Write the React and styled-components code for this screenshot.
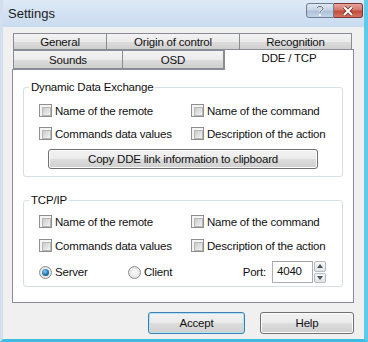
import React from 'react';
import styled, { createGlobalStyle } from 'styled-components';

const GlobalStyle = createGlobalStyle`
  html, body {
    margin: 0;
    padding: 0;
    background: #ffffff;
  }
  * {
    box-sizing: border-box;
  }
`;

const Window = styled.div`
  width: 368px;
  height: 342px;
  display: flex;
  flex-direction: column;
  border-left: 3px solid #d3dfee;
  border-right: 4px solid #5fcaea;
  border-bottom: 3px solid #3fbde0;
  font-family: "Liberation Sans", Arial, sans-serif;
  font-size: 11px;
  letter-spacing: -0.2px;
  color: #000;
  overflow: hidden;
`;

const TitleBar = styled.div`
  height: 27px;
  flex: none;
  display: flex;
  align-items: flex-start;
  justify-content: space-between;
  padding: 0 0 0 5px;
  background: linear-gradient(#dde9f6, #c9dbef);
`;

const Title = styled.span`
  font-size: 13px;
  letter-spacing: 0;
  line-height: 27px;
  color: #1b1b1b;
`;

const Controls = styled.div`
  display: flex;
  margin-top: 3px;
  margin-right: 1px;
`;

const CaptionButton = styled.div`
  width: ${p => p.w}px;
  height: 15px;
  display: flex;
  align-items: center;
  justify-content: center;
  border: 1px solid ${p => (p.close ? '#7a3a33' : '#6d7e95')};
  border-radius: ${p => (p.close ? '0 3px 3px 0' : '3px 0 0 3px')};
  border-left-width: ${p => (p.close ? 0 : 1)}px;
  background: ${p =>
    p.close
      ? 'linear-gradient(#e8a59c 0%, #d4786c 45%, #c44b3b 55%, #d4735f 100%)'
      : 'linear-gradient(#dfe8f2 0%, #c7d5e6 45%, #aec1d9 55%, #c3d4e8 100%)'};
`;

const Client = styled.div`
  flex: 1;
  display: flex;
  flex-direction: column;
  background: #f0f0f0;
  padding: 6px 10px 0 9px;
`;

const Tabs = styled.div`
  display: flex;
  flex-direction: column;
`;

const TabRow = styled.div`
  display: flex;
  align-items: flex-end;
  height: ${p => p.h}px;
  padding-left: 1px;
`;

const Tab = styled.div`
  width: ${p => p.w}px;
  height: ${p => (p.active ? 21 : p.h)}px;
  margin-bottom: ${p => (p.active ? -1 : 0)}px;
  margin-right: ${p => (p.active ? -2 : 0)}px;
  position: relative;
  z-index: ${p => (p.active ? 2 : 1)};
  display: flex;
  justify-content: center;
  align-items: ${p => (p.active ? 'flex-start' : 'center')};
  padding-top: ${p => (p.active ? 2 : 0)}px;
  border: 1px solid #898c95;
  border-bottom: ${p => (p.active ? 'none' : '1px solid #898c95')};
  border-left-width: ${p => (p.first || p.active ? 1 : 0)}px;
  background: ${p => (p.active ? '#ffffff' : 'linear-gradient(#f3f3f3 0%, #ebebeb 50%, #dddddd 51%, #cfcfcf 100%)')};
  font-size: 11.5px;
  color: #111;
`;

const Panel = styled.div`
  height: 234px;
  border: 1px solid #898c95;
  background: #ffffff;
  padding: 11px 0 0 10px;
  display: flex;
  flex-direction: column;
`;

const Group = styled.fieldset`
  width: 320px;
  margin: ${p => p.mt}px 0 0 0;
  padding: ${p => p.pt}px 8px ${p => p.pb}px 15px;
  border: 1px solid #d5dfe5;
  border-radius: 3px;
  min-width: 0;
`;

const Legend = styled.legend`
  padding: 0 2px;
  margin-left: -10px;
  line-height: 13px;
  font-size: 11.5px;
  color: #111;
`;

const Grid = styled.div`
  display: grid;
  grid-template-columns: 152px 1fr;
  grid-auto-rows: 15px;
  row-gap: ${p => p.gap}px;
`;

const Option = styled.label`
  display: flex;
  align-items: center;
  gap: 3px;
  width: ${p => (p.w ? `${p.w}px` : 'auto')};
  flex: none;
  font-size: 11.5px;
  color: #111;
  white-space: nowrap;
`;

const CheckBox = styled.span`
  width: 13px;
  height: 13px;
  flex: none;
  border: 1px solid #8f8f8f;
  background: #f4f4f4;
  padding: 2px;
  &::after {
    content: '';
    display: block;
    width: 7px;
    height: 7px;
    border: 1px solid #b8b8b8;
    background: linear-gradient(135deg, #cbcbcb, #f3f3f3);
  }
`;

const Radio = styled.span`
  width: 13px;
  height: 13px;
  flex: none;
  border-radius: 50%;
  border: 1px solid #8f8f8f;
  background: radial-gradient(circle at 50% 50%, #f5f5f5 30%, #d3d3d3 100%);
  display: flex;
  align-items: center;
  justify-content: center;
  &::after {
    content: '';
    display: ${p => (p.checked ? 'block' : 'none')};
    width: 7px;
    height: 7px;
    border-radius: 50%;
    background: radial-gradient(circle at 40% 35%, #7bd0f5 0%, #1d6aa6 60%, #0d3e70 100%);
  }
`;

const PushButton = styled.button`
  width: ${p => p.w}px;
  height: ${p => p.h}px;
  margin: ${p => p.m || 0};
  border: 1px solid ${p => (p.focused ? '#3c7fb1' : '#707070')};
  border-radius: 3px;
  background: linear-gradient(#f2f2f2 0%, #ebebeb 50%, #dddddd 51%, #cfcfcf 100%);
  box-shadow: inset 0 0 0 1px ${p => (p.focused ? '#aee4f5' : '#fcfcfc')};
  font-family: "Liberation Sans", Arial, sans-serif;
  font-size: 11.5px;
  letter-spacing: -0.2px;
  color: #111;
  padding: 0;
`;

const RadioRow = styled.div`
  display: flex;
  align-items: center;
  height: 22px;
  margin-top: 8px;
`;

const PortLabel = styled.span`
  font-size: 11.5px;
  color: #111;
  margin-left: auto;
  margin-right: 6px;
`;

const PortInput = styled.div`
  width: 41px;
  height: 22px;
  border: 1px solid #abadb3;
  border-top-color: #a0a3aa;
  padding: 3px 0 0 4px;
  font-size: 11.5px;
  color: #111;
  background: #fff;
`;

const Spinner = styled.div`
  display: flex;
  flex-direction: column;
  gap: 1px;
  margin-left: 1px;
  margin-right: 8px;
  height: 22px;
`;

const SpinButton = styled.div`
  width: 12px;
  height: 10.5px;
  border: 1px solid #b6bbc3;
  border-radius: 2px;
  background: linear-gradient(#f7f7f7, #e2e4e8);
  display: flex;
  align-items: center;
  justify-content: center;
`;

const Footer = styled.div`
  display: flex;
  justify-content: flex-end;
  gap: 15px;
  margin-top: 9px;
`;

const Arrow = ({ up }) => (
  <svg width="6" height="4" viewBox="0 0 6 4">
    <path d={up ? 'M0 4 L3 0 L6 4 Z' : 'M0 0 L3 4 L6 0 Z'} fill="#4d5563" />
  </svg>
);

const Check = ({ children }) => (
  <Option>
    <CheckBox />
    {children}
  </Option>
);

const CheckGrid = ({ gap }) => (
  <Grid gap={gap}>
    <Check>Name of the remote</Check>
    <Check>Name of the command</Check>
    <Check>Commands data values</Check>
    <Check>Description of the action</Check>
  </Grid>
);

export default function App() {
  return (
    <>
      <GlobalStyle />
      <Window>
        <TitleBar>
          <Title>Settings</Title>
          <Controls>
            <CaptionButton w={28}>
              <svg width="10" height="11" viewBox="0 0 10 11">
                <path d="M2 3.2 C2 1 8 1 8 3.5 C8 5.5 5 5.5 5 7.5" stroke="#fff" strokeWidth="2" fill="none" />
                <rect x="4" y="9" width="2" height="2" fill="#fff" />
                <path d="M2 3.2 C2 1 8 1 8 3.5 C8 5.5 5 5.5 5 7.5" stroke="#38475c" strokeWidth="1" fill="none" />
              </svg>
            </CaptionButton>
            <CaptionButton w={29} close>
              <svg width="12" height="10" viewBox="0 0 12 10">
                <path d="M2 1 L10 9 M10 1 L2 9" stroke="#5b1d17" strokeWidth="3.4" />
                <path d="M2 1 L10 9 M10 1 L2 9" stroke="#fff" strokeWidth="2.2" />
              </svg>
            </CaptionButton>
          </Controls>
        </TitleBar>
        <Client>
          <Tabs>
            <TabRow h={17}>
              <Tab w={94} h={17} first>General</Tab>
              <Tab w={133} h={17}>Origin of control</Tab>
              <Tab w={112} h={17}>Recognition</Tab>
            </TabRow>
            <TabRow h={19}>
              <Tab w={110} h={19} first>Sounds</Tab>
              <Tab w={101} h={19}>OSD</Tab>
              <Tab w={130} active>DDE / TCP</Tab>
            </TabRow>
            <Panel>
              <Group mt={0} pt={9} pb={7}>
                <Legend>Dynamic Data Exchange</Legend>
                <CheckGrid gap={8} />
                <PushButton w={270} h={20} m="8px 0 0 9px">
                  Copy DDE link information to clipboard
                </PushButton>
              </Group>
              <Group mt={17} pt={7} pb={3}>
                <Legend>TCP/IP</Legend>
                <CheckGrid gap={9} />
                <RadioRow>
                  <Option w={89}>
                    <Radio checked />
                    Server
                  </Option>
                  <Option>
                    <Radio />
                    Client
                  </Option>
                  <PortLabel>Port:</PortLabel>
                  <PortInput>4040</PortInput>
                  <Spinner>
                    <SpinButton>
                      <Arrow up />
                    </SpinButton>
                    <SpinButton>
                      <Arrow />
                    </SpinButton>
                  </Spinner>
                </RadioRow>
              </Group>
            </Panel>
          </Tabs>
          <Footer>
            <PushButton w={97} h={22} focused>Accept</PushButton>
            <PushButton w={94} h={22}>Help</PushButton>
          </Footer>
        </Client>
      </Window>
    </>
  );
}
